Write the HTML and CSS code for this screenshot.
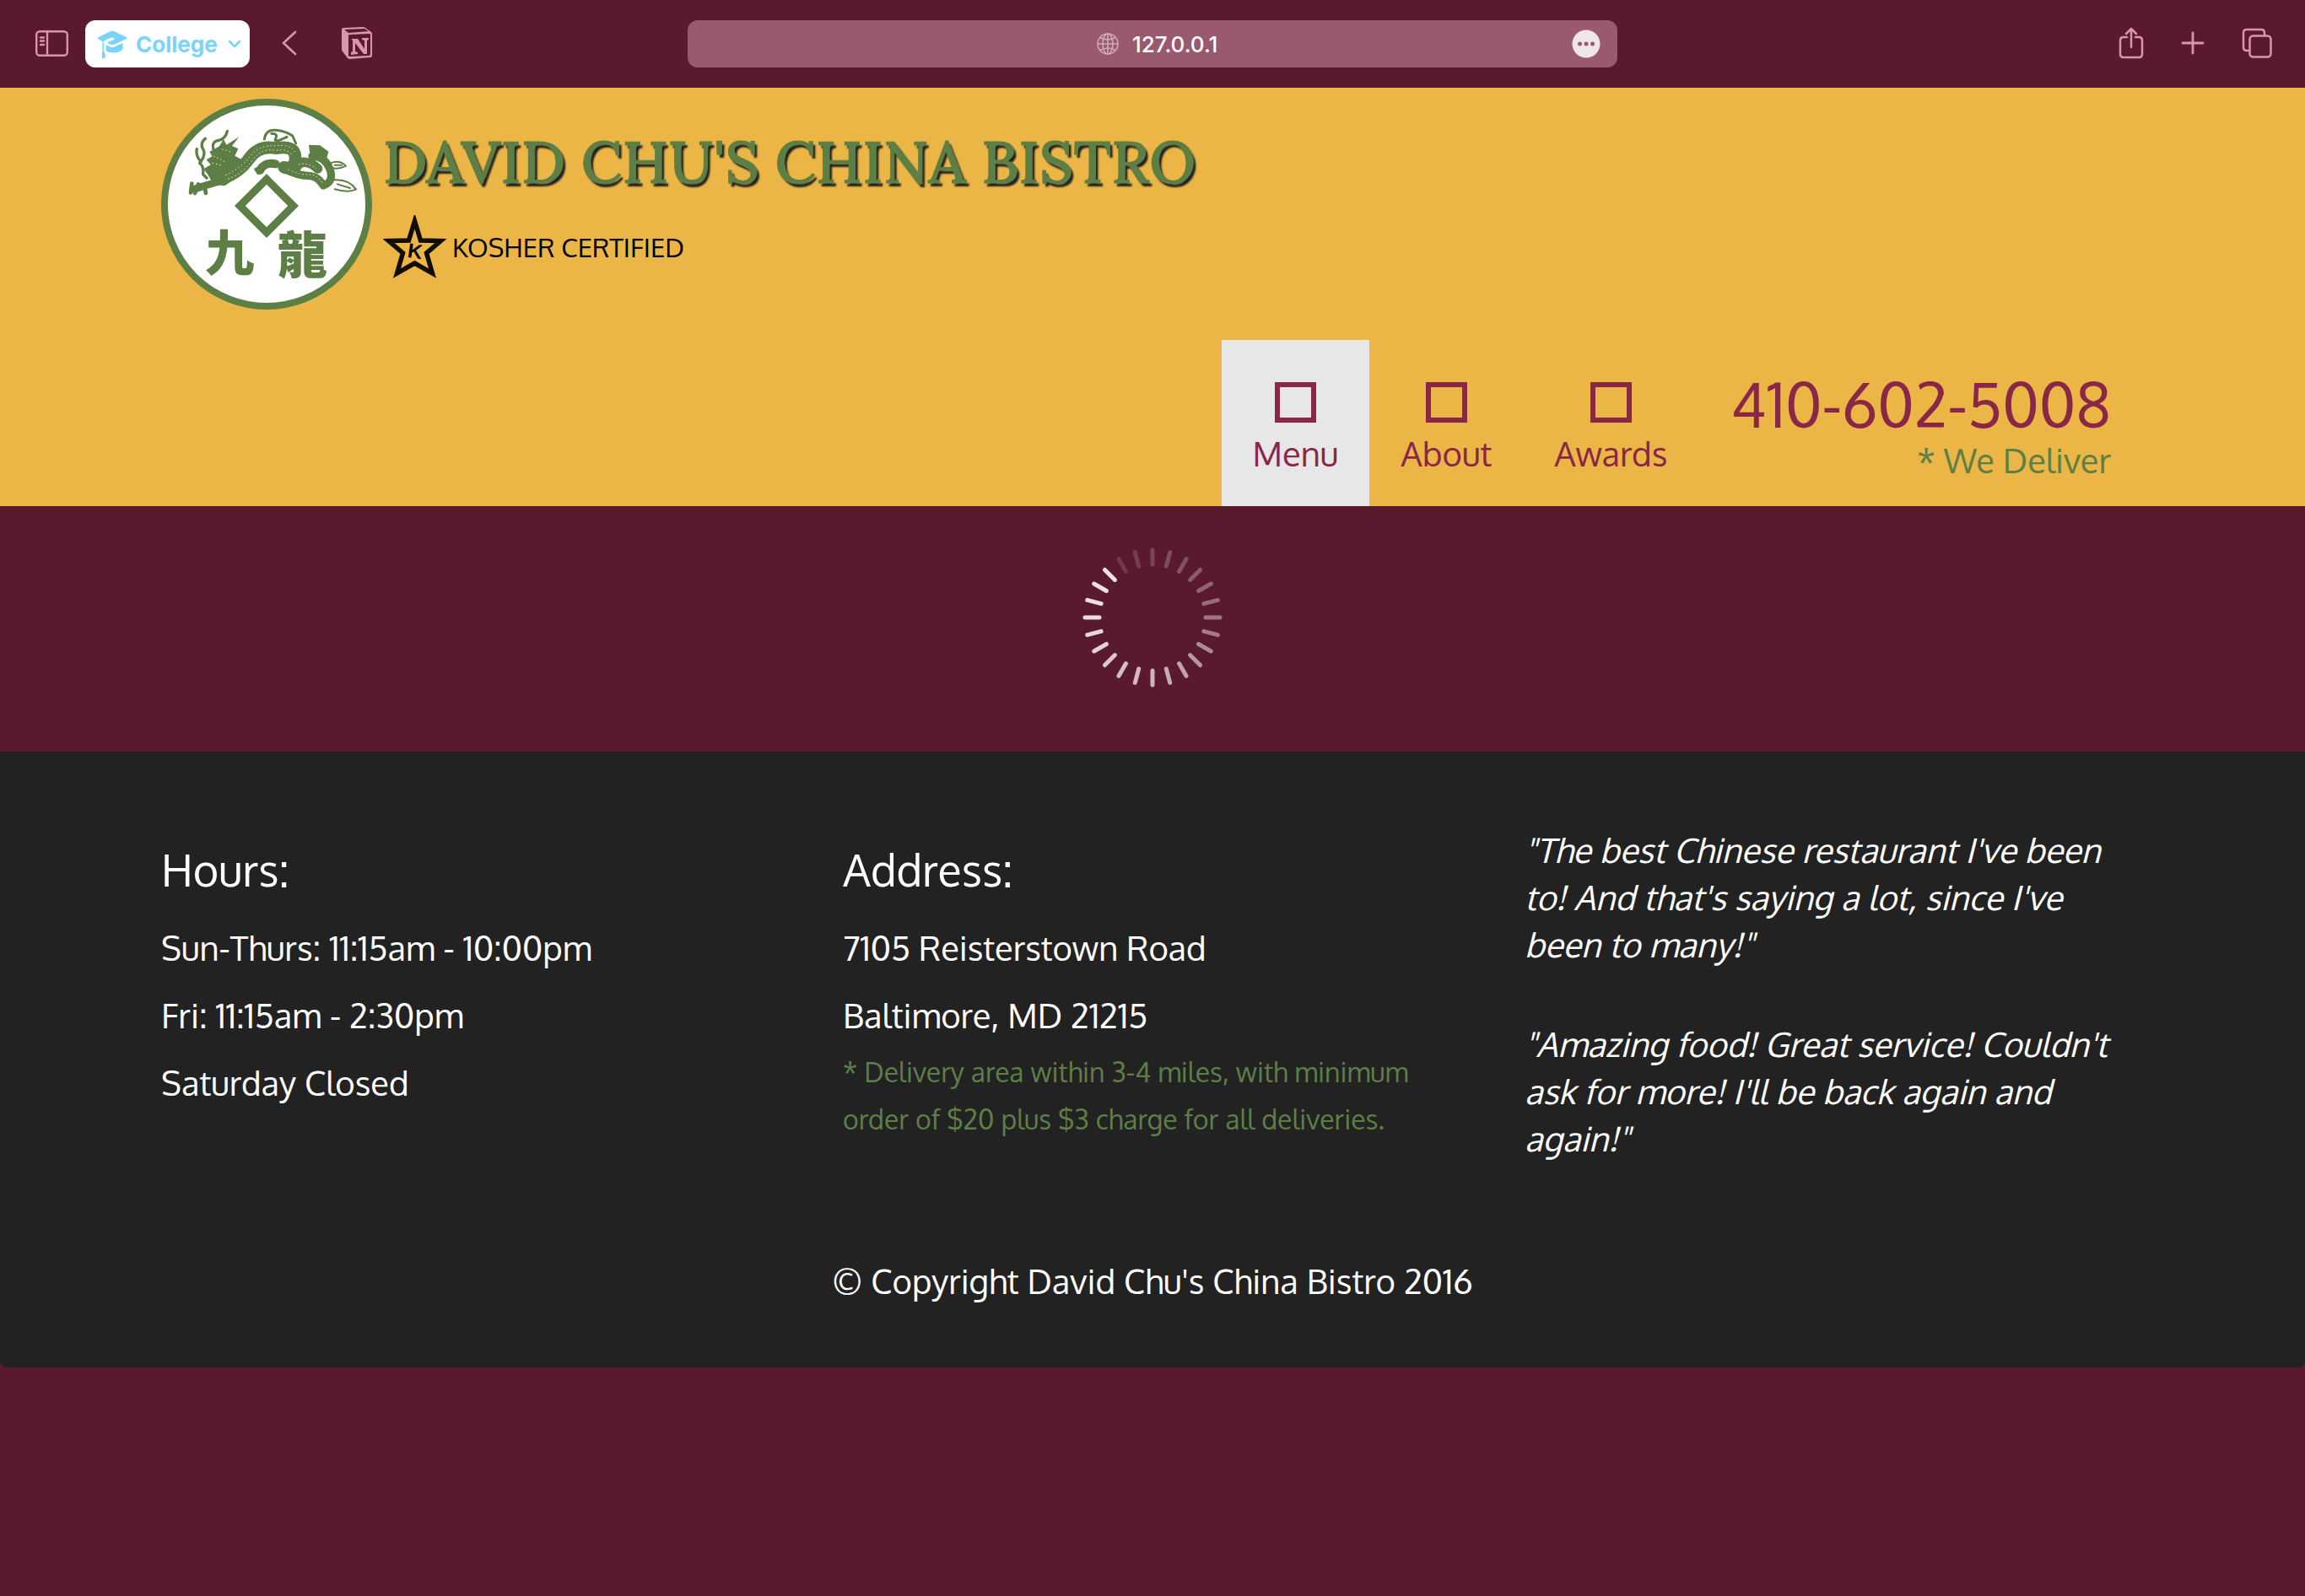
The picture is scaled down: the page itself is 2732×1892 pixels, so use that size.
FILE: index.html
```html
<!DOCTYPE html>
<html lang="en">
<head>
<meta charset="utf-8">
<title>David Chu's China Bistro</title>
<link rel="stylesheet" href="styles.css">
</head>
<body>
<div class="toolbar">
  <div class="toolbar-group">
    <button class="icon-button" type="button" aria-label="Sidebar">
      <svg width="39" height="31" viewBox="0 0 39 31" fill="none" stroke="currentColor" stroke-width="2.4" stroke-linecap="round"><rect x="1.2" y="1.2" width="36.6" height="28.6" rx="4"/><path d="M14 1.5v28M6 8.500h4M6 12.500h4M6 17h4"/></svg>
    </button>
    <button class="profile" type="button">
      <svg width="36" height="33" viewBox="0 0 36 33"><path fill="currentColor" d="M1 8.500 16 1q2-1 4 0l15 7q1 1 0 2L21 16.500q-3 1.500-6 0l-3-1.500q2-2 5.500-3 3.500-1 3-2.500-1.500-1.500-4.500-.5-6 2-8.500 5L1 10q-1-1 0-1.500Z"/><path fill="currentColor" d="M6.500 14.500h1.500v10q2.500 3 1.500 8.500H6q-1-5 .5-8.500ZM10.500 17l5 2.500q2.500 1 5 0l10-4.500v7q-3 4.500-11 4.500-6 0-9-2.500Z"/></svg>
      <span>College</span>
      <svg class="chevron" width="16" height="10" viewBox="0 0 16 10" fill="none" stroke="currentColor" stroke-width="2.6" stroke-linecap="round" stroke-linejoin="round"><path d="M2 2l6 6 6-6"/></svg>
    </button>
    <button class="icon-button back" type="button" aria-label="Back">
      <svg width="18" height="30" viewBox="0 0 18 30" fill="none" stroke="currentColor" stroke-width="2.6" stroke-linecap="round" stroke-linejoin="round"><path d="M16 2 2 15l14 13"/></svg>
    </button>
    <button class="icon-button notion" type="button" aria-label="Notion">
      <svg width="38" height="40" viewBox="0 0 38 40"><path fill="currentColor" fill-rule="evenodd" d="M3 2 26 1q2 0 3 1l7 5q1 1 1 2v26q0 2-2 2L11 39q-2 0-3-1L2 30q-1-1-1-2V4q0-2 2-2Zm1 2 5 4 24-2-5-3ZM9 11v24q0 1 2 1l22-1q2 0 2-2V10q0-1-2-1L11 10q-2 0-2 1Z"/><path fill="currentColor" d="M13 15h7l8 12V17l-3-1v-2h8v2l-2 1v16h-4L17 20v10l3 1v2l-8 1v-3l2-1V17l-1-1Z"/></svg>
    </button>
  </div>
  <form class="address-bar">
    <label class="address-field">
      <svg width="26" height="26" viewBox="0 0 26 26" fill="none" stroke="currentColor" stroke-width="1.6" aria-label="Address"><circle cx="13" cy="13" r="12"/><ellipse cx="13" cy="13" rx="6" ry="12"/><path d="M13 1v24M1 13h24M4 5.500q9 5 18 0M4 20.500q9-5 18 0"/></svg>
      <input class="address-input" type="text" value="127.0.0.1">
    </label>
    <button class="more" type="button" aria-label="More">
      <svg width="34" height="34" viewBox="0 0 34 34"><circle cx="17" cy="17" r="16.500" fill="#f0e6ea"/><g fill="#99596e"><circle cx="9.500" cy="17" r="2.500"/><circle cx="17" cy="17" r="2.500"/><circle cx="24.500" cy="17" r="2.500"/></g></svg>
    </button>
  </form>
  <div class="toolbar-group toolbar-end">
    <button class="icon-button" type="button" aria-label="Share">
      <svg width="30" height="38" viewBox="0 0 30 38" fill="none" stroke="currentColor" stroke-width="2.500" stroke-linecap="round" stroke-linejoin="round"><path d="M10 12H6q-4 0-4 4v16q0 4 4 4h18q4 0 4-4V16q0-4-4-4h-4M15 24V2M9 8l6-6 6 6"/></svg>
    </button>
    <button class="icon-button" type="button" aria-label="New tab">
      <svg width="28" height="28" viewBox="0 0 28 28" stroke="currentColor" stroke-width="2.800" stroke-linecap="round"><path d="M14 2v24M2 14h24"/></svg>
    </button>
    <button class="icon-button" type="button" aria-label="Tabs">
      <svg width="36" height="36" viewBox="0 0 36 36" fill="none" stroke="currentColor" stroke-width="2.500"><rect x="9.500" y="9.500" width="25" height="25" rx="4"/><path d="M9 27H6q-4 0-4-4V6q0-4 4-4h17q4 0 4 4v3"/></svg>
    </button>
  </div>
</div>

<header class="site-header">
  <div class="container">
    <div class="brand">
      <a href="#" class="logo" aria-label="Home">
        <svg width="250" height="250" viewBox="33 36 750 750">
          <circle cx="408" cy="411" r="363" fill="#fff" stroke="#5d7f46" stroke-width="24"/>
          <path d="M408 322l95 95-95 95-95-95Z" fill="none" stroke="#5d7f46" stroke-width="27"/>
          <g fill="none" stroke="#5d7f46" stroke-linecap="round" stroke-linejoin="round">
            <path d="M250 320Q310 300 345 250T440 212Q510 200 510 245T470 280" stroke-width="44"/>
            <path d="M470 285Q520 310 555 310T610 345Q650 330 632 285T570 240" stroke-width="28"/>
            <path d="M510 290Q520 260 545 262T590 285" stroke-width="34"/>
            <path d="M150 358Q200 340 262 325" stroke-width="26"/>
            <path d="M385 290Q400 260 440 268" stroke-width="30"/>
            <path d="M142 338l-4 32M165 340l-12 32M188 350l4 22" stroke-width="14"/>
            <path d="M190 178Q170 195 182 215T170 265Q185 275 182 305L195 318M160 215Q155 240 175 260M268 152Q262 180 235 185T222 225" stroke-width="10"/>
            <path d="M400 180Q405 145 440 148T500 168L512 195M425 160Q450 160 440 178T480 172" stroke-width="9"/>
            <path d="M630 268Q665 250 690 275Q665 288 640 282M645 325Q700 320 726 358Q700 372 650 358M660 340l45 14M650 272l25 0" stroke-width="6"/>
          </g>
          <path fill="#5d7f46" d="M205 225l35-20 15-25 10 20 45-28-25 32 22 10-12 25 22 12-8 22 25 8-25 30-50 35-40-5-20-35-15-20 25-15-15-18 20-12ZM558 200l40 2 30 22-5 20-40-6-22-12ZM362 285l20-10 8 24-14 8Z"/>
          <g fill="none" stroke="#fff" stroke-width="3" stroke-dasharray="4 9">
            <path d="M262 308Q315 285 348 242T440 204Q490 195 508 225"/>
            <path d="M272 322Q325 300 358 255T440 220Q485 212 500 240"/>
            <path d="M485 288Q530 308 560 306T608 340M522 270Q550 260 585 285"/>
            <path d="M220 240l40 20M215 265l35 8M250 215l30 10"/>
          </g>
          <g class="logo-text" fill="#5d7f46"><text x="190" y="648" font-size="174">九</text><text x="446" y="656" font-size="178">龍</text></g>
        </svg>
      </a>
      <div class="brand-text">
        <h1 class="title"><a href="#">DAVID CHU'S CHINA BISTRO</a></h1>
        <p class="kosher">
          <svg width="75" height="75" viewBox="0 0 75 75"><path d="M37.500 7l7 23 24 .5-17 14.500 7 24-21-12-21 12 7-24-17-14.500 24-.5Z" fill="none" stroke="#120d04" stroke-width="5.500"/><text class="star-text" x="38" y="51" text-anchor="middle" font-size="24" transform="rotate(8 38 43)">K</text></svg>
          <span>KOSHER CERTIFIED</span>
        </p>
      </div>
    </div>
    <div class="nav-row">
      <nav class="nav">
        <a class="nav-item active" href="#"><span class="nav-icon"></span>Menu</a>
        <a class="nav-item" href="#"><span class="nav-icon"></span>About</a>
        <a class="nav-item" href="#"><span class="nav-icon"></span>Awards</a>
      </nav>
      <div class="contact">
        <a class="phone" href="tel:410-602-5008">410-602-5008</a>
        <div class="deliver">* We Deliver</div>
      </div>
    </div>
  </div>
</header>

<main class="main">
  <svg width="166" height="166" viewBox="-83 -83 166 166" stroke="#fcf0f5" stroke-width="5" stroke-linecap="round" role="img" aria-label="Loading">
    <defs><path id="tick" d="M0-80V-63"/></defs>
    <use href="#tick" opacity=".2"/>
    <use href="#tick" opacity=".23" transform="rotate(15)"/>
    <use href="#tick" opacity=".26" transform="rotate(30)"/>
    <use href="#tick" opacity=".3" transform="rotate(45)"/>
    <use href="#tick" opacity=".34" transform="rotate(60)"/>
    <use href="#tick" opacity=".38" transform="rotate(75)"/>
    <use href="#tick" opacity=".42" transform="rotate(90)"/>
    <use href="#tick" opacity=".46" transform="rotate(105)"/>
    <use href="#tick" opacity=".52" transform="rotate(120)"/>
    <use href="#tick" opacity=".58" transform="rotate(135)"/>
    <use href="#tick" opacity=".64" transform="rotate(150)"/>
    <use href="#tick" opacity=".68" transform="rotate(165)"/>
    <use href="#tick" opacity=".72" transform="rotate(180)"/>
    <use href="#tick" opacity=".74" transform="rotate(195)"/>
    <use href="#tick" opacity=".77" transform="rotate(210)"/>
    <use href="#tick" opacity=".81" transform="rotate(225)"/>
    <use href="#tick" opacity=".86" transform="rotate(240)"/>
    <use href="#tick" opacity=".88" transform="rotate(255)"/>
    <use href="#tick" opacity=".9" transform="rotate(270)"/>
    <use href="#tick" opacity=".91" transform="rotate(285)"/>
    <use href="#tick" opacity=".92" transform="rotate(300)"/>
    <use href="#tick" opacity=".93" transform="rotate(315)"/>
    <use href="#tick" opacity=".14" transform="rotate(330)"/>
    <use href="#tick" opacity=".17" transform="rotate(345)"/>
  </svg>
</main>

<footer class="footer">
  <div class="container columns">
    <section class="info">
      <h2>Hours:</h2>
      <p>Sun-Thurs: 11:15am - 10:00pm</p>
      <p>Fri: 11:15am - 2:30pm</p>
      <p>Saturday Closed</p>
    </section>
    <section class="info">
      <h2>Address:</h2>
      <p>7105 Reisterstown Road</p>
      <p>Baltimore, MD 21215</p>
      <p class="note">* Delivery area within 3-4 miles, with minimum order of $20 plus $3 charge for all deliveries.</p>
    </section>
    <section class="quotes">
      <p>"The best Chinese restaurant I've been to! And that's saying a lot, since I've been to many!"</p>
      <p>"Amazing food! Great service! Couldn't ask for more! I'll be back again and again!"</p>
    </section>
  </div>
  <p class="copyright">© Copyright David Chu's China Bistro 2016</p>
</footer>
</body>
</html>
```
FILE: styles.css
```css
* {
  box-sizing: border-box;
}

body {
  margin: 0;
  background: #591a2d;
  color: #fff;
  font-family: Oxygen, "Noto Sans", sans-serif;
  font-size: 40px;
}

h1, h2, p {
  margin: 0;
  font-weight: normal;
}

a {
  color: inherit;
  text-decoration: none;
}

svg {
  display: block;
  flex: none;
}

button {
  border: 0;
  padding: 0;
  background: none;
  color: inherit;
  font: inherit;
}

/* Browser toolbar */

.toolbar {
  display: grid;
  grid-template-columns: 1fr minmax(0, 1102px) 1fr;
  align-items: center;
  padding: 24px 39px;
  height: 104px;
  color: #d995ad;
  font-family: Inter, sans-serif;
  font-size: 26px;
}

.toolbar-group {
  display: flex;
  align-items: center;
  padding-left: 3px;
}

.toolbar-end {
  justify-content: flex-end;
  gap: 44px;
}

.icon-button {
  padding-bottom: 2px;
}

.profile {
  display: flex;
  align-items: center;
  gap: 10px;
  margin-left: 20px;
  padding: 0 10px 0 14px;
  height: 56px;
  border-radius: 12px;
  background: #fff;
  color: #7ad4fa;
  font-weight: 700;
}

.chevron {
  margin-left: 2px;
}

.back {
  margin-left: 38px;
}

.notion {
  margin-left: 52px;
}

.address-bar {
  display: grid;
  grid-template-columns: 1fr auto 1fr;
  align-items: center;
  padding: 0 20px 0 34px;
  height: 56px;
  border-radius: 12px;
  background: #99596e;
}

.address-field {
  grid-column: 2;
  display: flex;
  align-items: center;
  gap: 16px;
  color: #cfaab8;
}

.address-input {
  width: 104px;
  border: 0;
  padding: 0;
  background: none;
  color: #fff;
  font: 500 26px Inter, sans-serif;
}

.more {
  justify-self: end;
}

/* Header */

.container {
  max-width: 2350px;
  margin: 0 auto;
}

.site-header {
  padding-top: 13px;
  background: #ebb645;
}

.brand {
  display: flex;
  gap: 13px;
}

.logo-text {
  font-family: "Noto Sans CJK TC", sans-serif;
  font-weight: 900;
}

.brand-text {
  padding-top: 37px;
}

.title {
  color: #5d7f46;
  font: 550 70px/76px Lora, "Noto Serif", "Liberation Serif", serif;
  -webkit-text-stroke: 1px #5d7f46;
  text-shadow: 3px 4px 2px #222;
}

.kosher {
  display: flex;
  align-items: center;
  gap: 7px;
  margin-top: 25px;
  color: #000;
  font-size: 31px;
  line-height: 44px;
}

.star-text {
  font-family: "Liberation Sans", sans-serif;
  font-weight: bold;
}

.nav-row {
  display: flex;
  justify-content: flex-end;
  gap: 38px;
  margin-top: 36px;
  padding-right: 39px;
  line-height: 55px;
}

.nav {
  display: flex;
  color: #8a2648;
}

.nav-item {
  display: flex;
  flex-direction: column;
  align-items: center;
  gap: 9px;
  padding: 50px 37px 35px;
}

.nav-item.active {
  background: #e7e7e7;
}

.nav-icon {
  width: 49px;
  height: 48px;
  border: 6px solid;
}

.contact {
  padding-top: 36px;
  color: #5d7f46;
  text-align: right;
}

.phone {
  display: block;
  color: #8a2648;
  font-size: 72px;
  line-height: 79px;
}

/* Loading area */

.main {
  display: flex;
  justify-content: center;
  padding: 49px 0 76px;
}

/* Footer */

.footer {
  padding: 88px 0 75px;
  border-radius: 0 0 8px 8px;
  background: #222;
}

.columns {
  display: grid;
  grid-template-columns: repeat(3, 1fr);
  gap: 74px;
}

.info {
  padding-top: 20px;
  line-height: 80px;
}

.info h2 {
  margin-bottom: 20px;
  font-size: 52px;
  line-height: 64px;
}

.info .note {
  color: #5d7f46;
  font-size: 32px;
  line-height: 56px;
}

.quotes {
  display: flex;
  flex-direction: column;
  gap: 62px;
  padding-right: 30px;
  font-style: italic;
  line-height: 56px;
}

.copyright {
  margin-top: 113px;
  line-height: 56px;
  text-align: center;
}
```
